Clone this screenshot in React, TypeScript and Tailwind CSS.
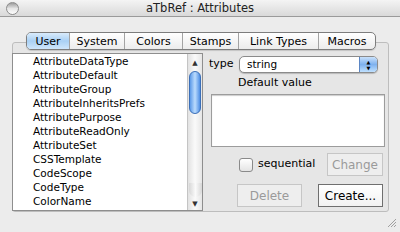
import { FC } from 'react'

const ATTRIBUTES = [
  'AttributeDataType',
  'AttributeDefault',
  'AttributeGroup',
  'AttributeInheritsPrefs',
  'AttributePurpose',
  'AttributeReadOnly',
  'AttributeSet',
  'CSSTemplate',
  'CodeScope',
  'CodeType',
  'ColorName',
  'ColorScheme',
]

const TABS = [
  { label: 'User', width: 'w-[42px]' },
  { label: 'System', width: 'w-[55px]' },
  { label: 'Colors', width: 'w-[58px]' },
  { label: 'Stamps', width: 'w-[56px]' },
  { label: 'Link Types', width: 'w-[80px]' },
  { label: 'Macros', width: 'w-[57px]' },
]

const font = "font-['Lucida_Grande','DejaVu_Sans',sans-serif]"

const TitleBar: FC = () => (
  <div className="flex items-center h-[17px] border-b border-[#9a9a9a] bg-gradient-to-b from-[#f4f4f4] to-[#d9d9d9]">
    <div className="ml-[6px] w-[13px] h-[13px] rounded-full border border-[#8c8c8c] bg-gradient-to-b from-[#9d9d9d] via-[#e6e6e6] to-[#fdfdfd]" />
    <div className="flex-1 text-center text-[11.5px] leading-none text-[#222] pr-[19px] pt-px">aTbRef : Attributes</div>
  </div>
)

const TabStrip: FC = () => (
  <div className="relative z-10 flex w-fit ml-[14px] h-[18px] rounded-[5px] border border-[#7d7d7d] bg-gradient-to-b from-white to-[#ececec] overflow-hidden shadow-[0_1px_1px_rgba(0,0,0,0.15)]">
    {TABS.map((tab, i) => (
      <div
        key={tab.label}
        className={`${tab.width} flex items-center justify-center text-[11px] leading-none text-black ${
          i > 0 ? 'border-l border-[#a3a3a3]' : ''
        } ${i === 0 ? 'bg-gradient-to-b from-[#d9ebfb] via-[#a9d0f4] to-[#cfe6fb]' : ''}`}>
        {tab.label}
      </div>
    ))}
  </div>
)

const ScrollBar: FC = () => (
  <div className="w-[15px] shrink-0 flex flex-col items-center border-l border-[#c4c4c4] bg-gradient-to-r from-[#e2e2e2] via-[#fafafa] to-[#e6e6e6]">
    <div className="h-[15px] flex items-center justify-center text-[7px] text-[#333] pt-[4px]">▲</div>
    <div className="mt-[2px] w-[12px] h-[43px] rounded-full border border-[#3b6fb8] bg-gradient-to-r from-[#5c9ae8] via-[#bcdcfd] to-[#4d8ee4]" />
    <div className="flex-1" />
    <div className="w-[13px] h-[14px] rounded-b-full bg-gradient-to-r from-[#d7d7d7] via-[#fafafa] to-[#d7d7d7] mb-[1px]" />
    <div className="h-[12px] flex items-center justify-center text-[7px] text-[#333]">▼</div>
  </div>
)

const AttributeList: FC = () => (
  <div className="flex w-[191px] h-[158px] border border-[#8e8e8e] bg-white">
    <div className="flex-1 overflow-hidden pl-[20px]">
      {ATTRIBUTES.map(name => (
        <div key={name} className="h-[14px] leading-[14px] text-[10.5px] text-black whitespace-nowrap">
          {name}
        </div>
      ))}
    </div>
    <ScrollBar />
  </div>
)

const PopupButton: FC = () => (
  <div className="flex w-[139px] h-[17px] rounded-[5px] border border-[#8b8b8b] bg-white overflow-hidden shadow-[0_1px_1px_rgba(0,0,0,0.2)]">
    <div className="flex-1 pl-[7px] text-[10.5px] leading-[15px] text-black">string</div>
    <div className="w-[18px] flex flex-col items-center justify-center border-l border-[#5b86c4] bg-gradient-to-b from-[#c9e1fb] via-[#7eb1ee] to-[#bfe0fe] text-[5px] leading-[6px] text-black">
      <span>▲</span>
      <span>▼</span>
    </div>
  </div>
)

const Button: FC<{ label: string; width: string; disabled?: boolean }> = ({ label, width, disabled }) => (
  <div
    className={`${width} h-[23px] flex items-center justify-center text-[12px] leading-none ${
      disabled
        ? 'border border-[#c6c6c6] text-[#9a9a9a] bg-[#eeeeee]'
        : 'border border-[#6f6f6f] text-black bg-gradient-to-b from-white to-[#f2f2f2]'
    }`}>
    {label}
  </div>
)

const App: FC = () => (
  <div className={`w-[400px] h-[232px] bg-[#ececec] overflow-hidden ${font}`}>
    <TitleBar />
    <div className="pt-[15px] px-[12px]">
      <TabStrip />
      <div className="-mt-[8px] w-[377px] h-[170px] border border-[#bdbdbd] rounded-[3px] bg-[#e6e6e6] flex pt-[10px]">
        <div className="-ml-px">
          <AttributeList />
        </div>
        <div className="flex-1 flex flex-col pt-[3px]">
          <div className="flex items-center">
            <span className="ml-[6px] w-[30px] text-[11px] text-black">type</span>
            <PopupButton />
          </div>
          <div className="ml-[35px] mt-[2px] text-[11px] leading-[16px] text-black">Default value</div>
          <div className="ml-[8px] mt-[3px] w-[174px] h-[53px] border border-[#9c9c9c] bg-white shadow-[inset_0_1px_1px_rgba(0,0,0,0.2)]" />
          <div className="flex items-center mt-[6px]">
            <div className="ml-[36px] w-[14px] h-[14px] rounded-[3px] border border-[#8a8a8a] bg-gradient-to-b from-white to-[#e4e4e4]" />
            <span className="ml-[5px] text-[11px] text-black">sequential</span>
            <div className="ml-auto mr-[5px]">
              <Button label="Change" width="w-[56px]" disabled />
            </div>
          </div>
          <div className="flex items-center mt-[8px]">
            <div className="ml-[34px]">
              <Button label="Delete" width="w-[65px]" disabled />
            </div>
            <div className="ml-auto mr-[5px]">
              <Button label="Create..." width="w-[65px]" />
            </div>
          </div>
        </div>
      </div>
    </div>
    <div className="flex justify-end pr-[3px] pt-[6px]">
      <svg width="10" height="10" viewBox="0 0 10 10">
        <path d="M9 1L1 9M9 4L4 9M9 7L7 9" stroke="#a0a0a0" strokeWidth="1" />
      </svg>
    </div>
  </div>
)

export default App
